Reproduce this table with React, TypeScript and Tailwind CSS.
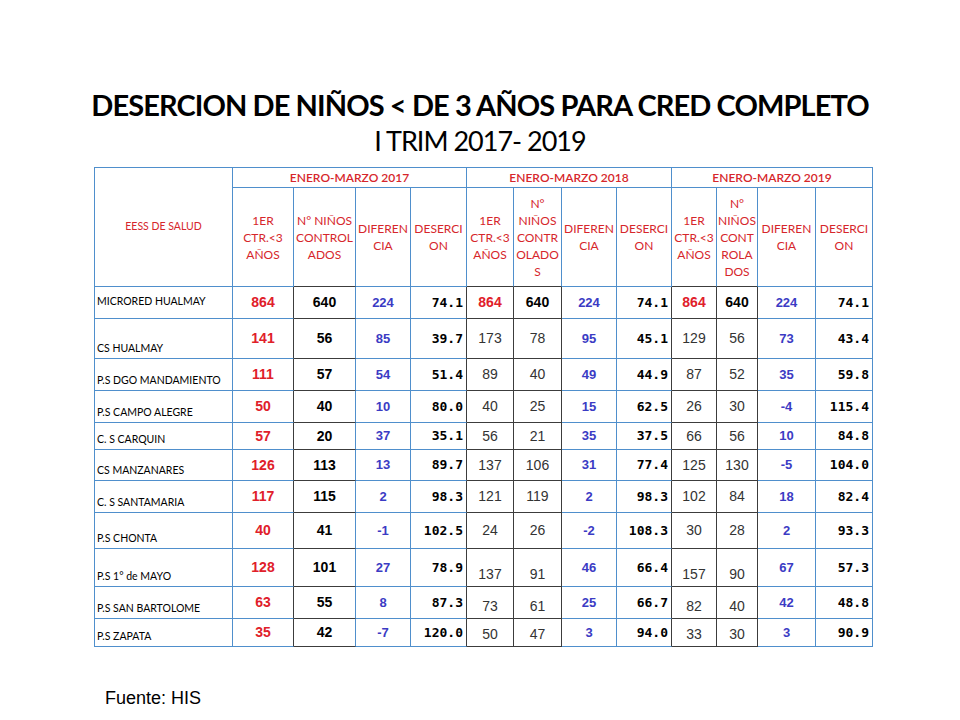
import React from 'react'

const BLUE_R = 'border-r-[#4f8fcc]'
const DARK_R = 'border-r-[#3c3c3c]'
const BLUE_B = 'border-b-[#4f8fcc]'
const DARK_B = 'border-b-[#3c3c3c]'

// right border colour per column (0 = EESS)
const rightCls = [BLUE_R, DARK_R, BLUE_R, BLUE_R, DARK_R, DARK_R, DARK_R, BLUE_R, DARK_R, DARK_R, DARK_R, BLUE_R, BLUE_R]
// bottom border colour per column
const bottomCls = [BLUE_B, BLUE_B, DARK_B, BLUE_B, BLUE_B, DARK_B, DARK_B, BLUE_B, BLUE_B, DARK_B, DARK_B, BLUE_B, BLUE_B]

type Row = { name: string; v: string[] }

const rows: Row[] = [
  { name: 'MICRORED HUALMAY', v: ['864', '640', '224', '74.1', '864', '640', '224', '74.1', '864', '640', '224', '74.1'] },
  { name: 'CS HUALMAY', v: ['141', '56', '85', '39.7', '173', '78', '95', '45.1', '129', '56', '73', '43.4'] },
  { name: 'P.S DGO MANDAMIENTO', v: ['111', '57', '54', '51.4', '89', '40', '49', '44.9', '87', '52', '35', '59.8'] },
  { name: 'P.S CAMPO ALEGRE', v: ['50', '40', '10', '80.0', '40', '25', '15', '62.5', '26', '30', '-4', '115.4'] },
  { name: 'C. S CARQUIN', v: ['57', '20', '37', '35.1', '56', '21', '35', '37.5', '66', '56', '10', '84.8'] },
  { name: 'CS MANZANARES', v: ['126', '113', '13', '89.7', '137', '106', '31', '77.4', '125', '130', '-5', '104.0'] },
  { name: 'C. S SANTAMARIA', v: ['117', '115', '2', '98.3', '121', '119', '2', '98.3', '102', '84', '18', '82.4'] },
  { name: 'P.S CHONTA', v: ['40', '41', '-1', '102.5', '24', '26', '-2', '108.3', '30', '28', '2', '93.3'] },
  { name: 'P.S 1° de MAYO', v: ['128', '101', '27', '78.9', '137', '91', '46', '66.4', '157', '90', '67', '57.3'] },
  { name: 'P.S SAN BARTOLOME', v: ['63', '55', '8', '87.3', '73', '61', '25', '66.7', '82', '40', '42', '48.8'] },
  { name: 'P.S ZAPATA', v: ['35', '42', '-7', '120.0', '50', '47', '3', '94.0', '33', '30', '3', '90.9'] },
]

const subHeads: React.ReactNode[][] = [
  [<>1ER<br />CTR.&lt;3<br />AÑOS</>, <>N° NIÑOS<br />CONTROL<br />ADOS</>, <>DIFEREN<br />CIA</>, <>DESERCI<br />ON</>],
  [<>1ER<br />CTR.&lt;3<br />AÑOS</>, <>N°<br />NIÑOS<br />CONTR<br />OLADO<br />S</>, <>DIFEREN<br />CIA</>, <>DESERCI<br />ON</>],
  [<>1ER<br />CTR.&lt;3<br />AÑOS</>, <>N°<br />NIÑOS<br />CONT<br />ROLA<br />DOS</>, <>DIFEREN<br />CIA</>, <>DESERCI<br />ON</>],
]

const arial = "font-['Liberation_Sans',Arial,sans-serif]"
const calibri = "font-['Lato','Noto_Sans',sans-serif]"

function valueCls(r: number, g: number, k: number) {
  if (k === 3) return "font-['DejaVu_Sans_Mono',monospace] font-bold text-[13px] text-black justify-end items-center pr-[3px]"
  const bold = g === 0 || r === 0
  if (k === 2) return `${arial} font-bold text-[13px] text-[#3b3bc4] justify-center items-center`
  if (bold) {
    const c = k === 0 ? 'text-[#e0202a]' : 'text-black'
    return `${arial} font-bold text-[14px] ${c} justify-center items-center`
  }
  const align = r >= 8 ? 'items-end pb-[1px]' : 'items-center'
  return `${arial} text-[14px] text-[#333] justify-center ${align}`
}

export default function App() {
  return (
    <div className="w-[960px] h-[720px] bg-white flex flex-col">
      <div className={`${calibri} pt-[87px] text-center text-black`}>
        <div className="text-[29px] font-bold leading-[36px] tracking-[-0.9px]">DESERCION DE NIÑOS &lt; DE 3 AÑOS PARA CRED COMPLETO</div>
        <div className="text-[27px] leading-[36px] tracking-[-1px]">I TRIM 2017- 2019</div>
      </div>

      <div className="ml-[94px] mt-[8px] w-max">
        <div className="grid grid-cols-[138px_61px_62px_55px_56px_47px_48px_55px_55px_45px_41px_58px_57px] grid-rows-[20px_99px_32px_40px_32px_32px_27px_31px_32px_36px_38px_32px_28px] border-l border-t border-l-[#4f8fcc] border-t-[#4f8fcc]">
          <div className={`${calibri} row-span-2 border-r border-b border-r-[#4f8fcc] border-b-[#4f8fcc] flex items-center justify-center text-[10.5px] text-[#d6262b]`}>
            EESS DE SALUD
          </div>
          {['ENERO-MARZO 2017', 'ENERO-MARZO 2018', 'ENERO-MARZO 2019'].map(t => (
            <div key={t} className={`${calibri} col-span-4 border-r border-b border-r-[#4f8fcc] border-b-[#4f8fcc] flex items-center justify-center text-[12px] font-semibold text-[#d6262b]`}>
              {t}
            </div>
          ))}
          {subHeads.map((grp, g) =>
            grp.map((h, k) => {
              const col = 1 + g * 4 + k
              return (
                <div key={`h${col}`} className={`${calibri} border-r border-b ${BLUE_R} ${bottomCls[col]} flex items-center justify-center text-center text-[12px] leading-[17px] text-[#d6262b] whitespace-nowrap`}>
                  <div>{h}</div>
                </div>
              )
            })
          )}
          {rows.map((row, r) => (
            <React.Fragment key={row.name}>
              <div className={`${calibri} border-r border-b ${rightCls[0]} ${bottomCls[0]} flex ${r === 0 ? 'items-center' : 'items-end'} pl-[2px] pb-[1px] text-[10.5px] text-black whitespace-nowrap`}>
                {row.name}
              </div>
              {row.v.map((val, i) => {
                const g = Math.floor(i / 4)
                const k = i % 4
                const col = i + 1
                return (
                  <div key={col} className={`border-r border-b ${rightCls[col]} ${bottomCls[col]} flex ${valueCls(r, g, k)}`}>
                    {val}
                  </div>
                )
              })}
            </React.Fragment>
          ))}
        </div>
      </div>

      <div className={`${arial} ml-[105px] mt-[38px] text-[18px] text-black`}>Fuente: HIS</div>
    </div>
  )
}
